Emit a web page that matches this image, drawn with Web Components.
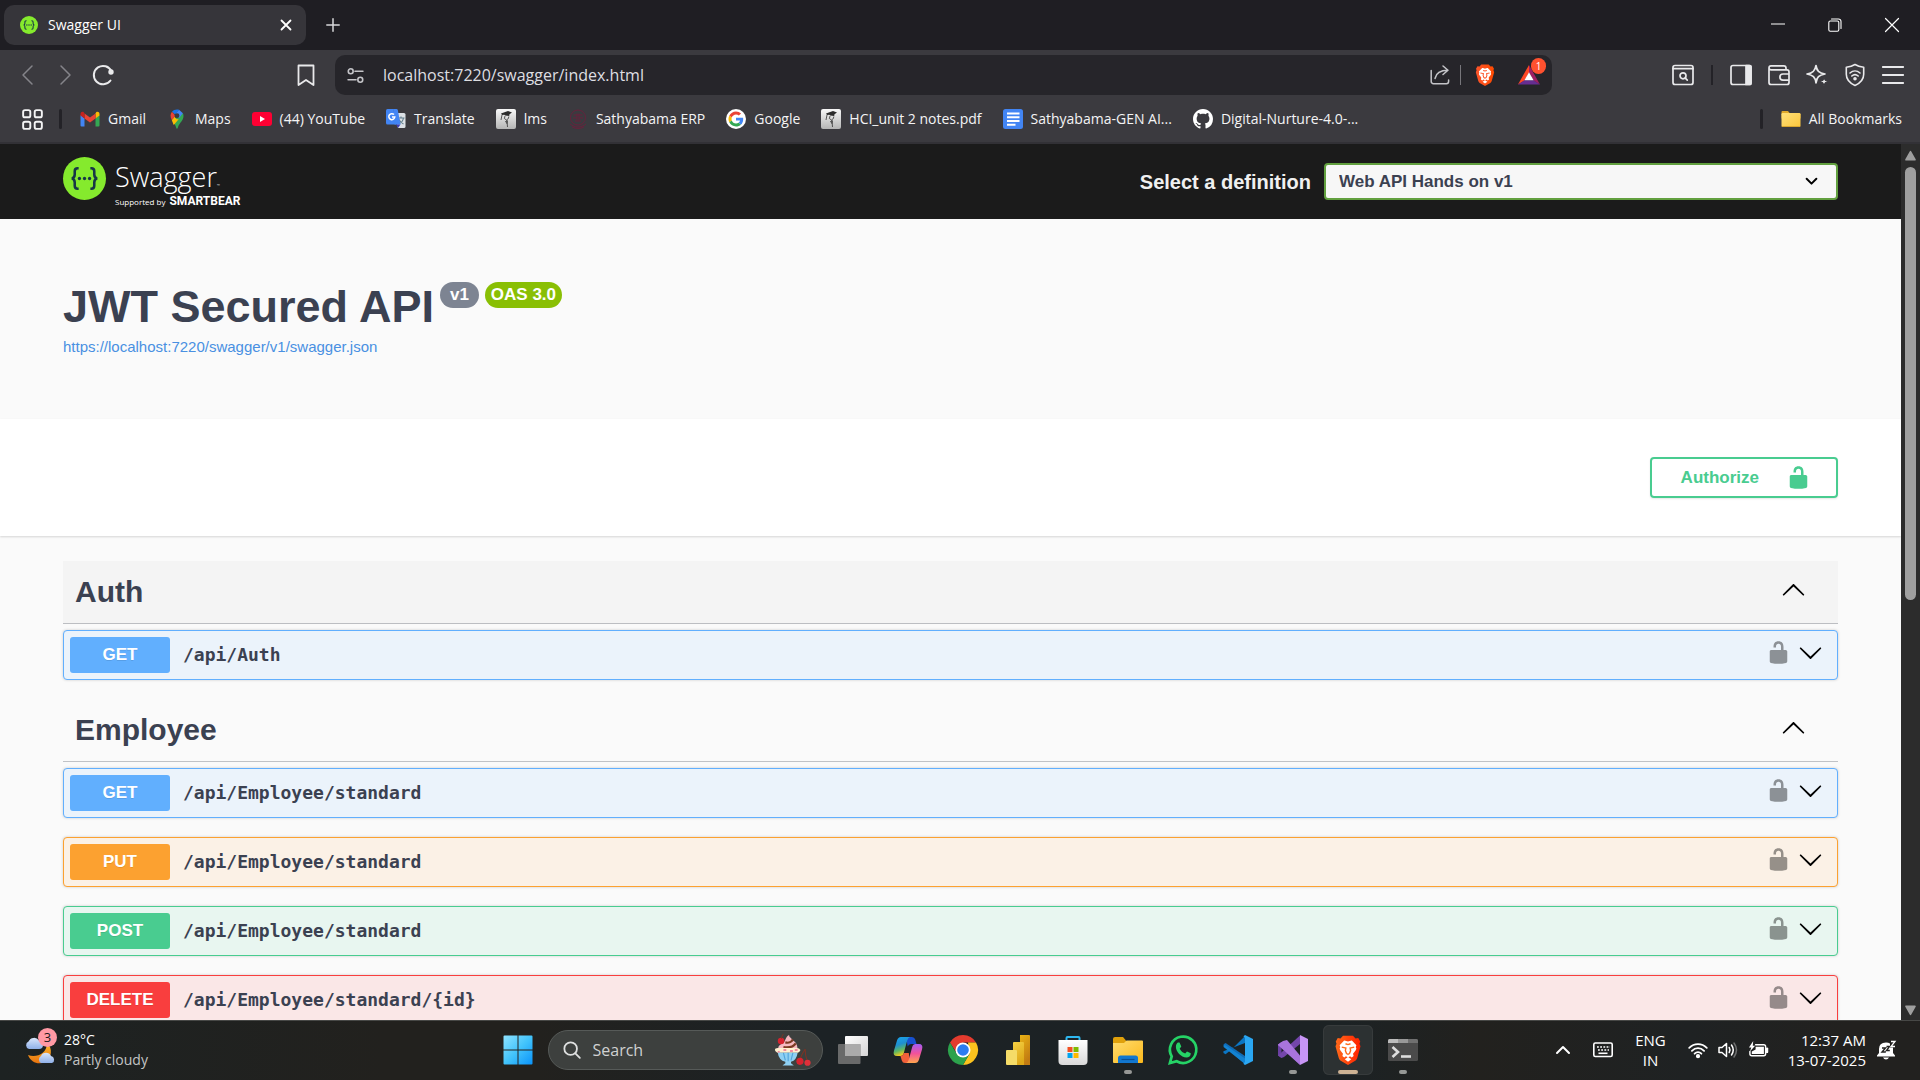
<!DOCTYPE html>
<html lang="en">
<head>
<meta charset="utf-8">
<title>Swagger UI</title>
<style>
  html, body { height: 100%; }
  body { margin: 0; overflow: hidden; background: #1f1e23; }
</style>
</head>
<body>
<desktop-screen></desktop-screen>

<script>
const UI_FONT = '"Open Sans", "Noto Sans", sans-serif';
const define = (name, html, setup) => {
  const template = document.createElement('template');
  template.innerHTML = html;
  customElements.define(name, class extends HTMLElement {
    connectedCallback() {
      if (this.shadowRoot) return;
      this.attachShadow({ mode: 'open' }).append(template.content.cloneNode(true));
      if (setup) setup(this, this.shadowRoot);
    }
  });
};

/* ---------- icons ---------- */
const line = (box, body, w = 1.5) => `<svg viewBox="0 0 ${box} ${box}" fill="none" stroke="currentColor" stroke-width="${w}" stroke-linecap="round" stroke-linejoin="round">${body}</svg>`;
const art = (box, body) => `<svg viewBox="0 0 ${box} ${box}">${body}</svg>`;

const lion = (a, b) => art(24, `<defs><linearGradient id="g"><stop offset="0" stop-color="${a}"/><stop offset="1" stop-color="${b}"/></linearGradient></defs>
  <path fill="url(#g)" d="M8 .5h8l2 2.2 2.2-.3 1.6 2.8-.6 1.7.8 2.1-2.6 9.4c-.3 1-.8 1.6-1.6 2.200L12 24l-5.800-3.400c-.8-.6-1.300-1.200-1.600-2.200L2 9l.8-2.100-.6-1.700 1.600-2.800 2.200.3z"/>
  <path fill="#fff" d="M12 5.200c.8 0 2.400-.9 3.300-.7l3.400 3.700-.5 1.300.5 1.500c-.5 1.500-2 2.900-2.700 4l.5 1.800-1.500 1.200-1.400-1-1.600 1.100-1.600-1.100-1.400 1-1.500-1.200.5-1.800c-.7-1.100-2.200-2.500-2.700-4l.5-1.500-.5-1.300 3.400-3.700c.9-.2 2.500.7 3.300.7z"/>
  <path fill="#fff" d="M12 17.600l2.600 1.700L12 21.400l-2.600-2.100z"/>
  <path fill="none" stroke="${a}" stroke-width="1.100" d="M7 9.700l3.300.7-.4 2.100.9 2.300L12 15.400l1.200-.6.9-2.300-.4-2.100 3.300-.7M10 7l2 .7 2-.7"/>`);

const chevronPath = 'M17.418 6.109c.272-.268.709-.268.979 0s.271.701 0 .969l-7.908 7.830c-.27.268-.707.268-.979 0l-7.908-7.830c-.27-.268-.27-.701 0-.969s.709-.268.979 0L10 13.250z';
const gradCap = art(20, `<defs><linearGradient id="g" x2="0" y2="1"><stop offset="0" stop-color="#f8f8f8"/><stop offset="1" stop-color="#b5b5b5"/></linearGradient></defs>
  <rect width="20" height="20" rx="2" fill="url(#g)"/><path fill="#2b2b2b" d="M5 4.500L12 2l4 1.500-2.500 1.800-.3 1.700-4-.4-1-.8L6 6z"/>
  <path fill="none" stroke="#333" stroke-width=".8" d="M6 6l-1 5M9 7l-.6 2.500 2 1.500 2-1.500.4-2M9 13l2.500-1.500M11 12l.5 6"/><path fill="#555" d="M10 11l2 1-.5 3-1.500-.5z"/>`);

const ICONS = {
  swagger: art(44, `<circle cx="22" cy="22" r="22" fill="#85ea2d"/><g fill="none" stroke="#173647" stroke-width="2.600"><path d="M16 11.500h-1c-2.200 0-3 1-3 3v3.500c0 2.600-.8 3.600-3 4 2.200.4 3 1.400 3 4v3.500c0 2 .8 3 3 3h1M28 11.500h1c2.200 0 3 1 3 3v3.500c0 2.600.8 3.600 3 4-2.200.4-3 1.400-3 4v3.500c0 2-.8 3-3 3h-1"/></g><g fill="#173647"><circle cx="16.800" cy="22" r="1.700"/><circle cx="22" cy="22" r="1.700"/><circle cx="27.200" cy="22" r="1.700"/></g>`),
  close: line(12, '<path d="M1.500 1.500l9 9M10.500 1.500l-9 9"/>', 1.8),
  plus: line(14, '<path d="M7 .8v12.400M.8 7h12.400"/>'),
  minimize: line(14, '<path d="M0 6h14" stroke-linecap="butt"/>', 1),
  restore: line(14, '<rect x=".8" y="3" width="10" height="10.200" rx="1.500"/><path d="M3.500 1h7a2.500 2.500 0 0 1 2.500 2.500v7"/>', 1.1),
  winclose: line(14, '<path d="M.5.5l13 13M13.500.5l-13 13"/>', 1.2),
  back: line(20, '<path d="M14 1L5 10l9 9"/>'),
  forward: line(20, '<path d="M6 1l9 9-9 9"/>'),
  reload: line(22, '<path d="M18.500 16.500A9.200 9.200 0 1 1 19.500 7.500"/><circle cx="19" cy="8" r="1.700" fill="currentColor"/>', 2),
  bookmark: line(22, '<path d="M3.500 1.500h15v19.500l-7.500-5-7.500 5z"/>', 1.8),
  tune: line(16, '<circle cx="3.500" cy="4" r="2.300"/><path d="M7.500 4H15M1 12h7.500"/><circle cx="12.500" cy="12" r="2.300"/>', 1.5),
  share: line(20, '<path d="M1.200 5.500v11a2.200 2.200 0 0 0 2.200 2.200h13a2.200 2.200 0 0 0 2.200-2.200V15M13 1l5 4.300L13 9.500M18 5.300C10 5.300 6 8 5 13.500"/>', 1.5),
  brave: lion('#fb542b', '#ff4a00'),
  braveApp: lion('#ff6a1a', '#ff2000'),
  bat: art(22, '<path fill="#ff4724" d="M11 1L0 20.500l6.500-4L11 8.500z"/><path fill="#9e1f63" d="M11 1l11 19.500-6.500-4L11 8.500z"/><path fill="#662d91" d="M0 20.500h22l-6.500-4.200h-9z"/><path fill="#fff" d="M11 8.300l4.600 8H6.400z"/>'),
  find: line(22, '<rect x="1" y="1.500" width="20" height="19" rx="2"/><path d="M1 4.700h20"/><circle cx="11" cy="11.800" r="3"/><path d="M13.300 14.200l2 2"/>', 1.7),
  sidebar: line(22, '<rect x="1" y="1.500" width="20" height="19" rx="2"/><path fill="currentColor" d="M16 1.500h4q1 0 1 1v17q0 1-1 1h-4z"/>', 1.7),
  wallet: line(22, '<path d="M18 5.500V4q0-2.200-2.200-2.200H3Q1 1.800 1 4v14.500q0 2 2 2h16q2 0 2-2V8q0-2.200-2-2.200H3.200Q1 5.800 1 4M21 10h-6a3 3 0 0 0 0 6.200H21"/>', 1.7),
  sparkle: line(22, '<path d="M10 1.500c.8 5.200 2.800 7.700 9 8.500-6.200 1-8.200 3.300-9 8.800C9.200 13.300 7 11 1 10c6-.8 8.200-3.300 9-8.500z"/><path fill="currentColor" stroke="#3b3a3f" stroke-width="1" stroke-linejoin="miter" d="M18 13.200l1.100 3.200 3.200 1.100-3.200 1.100L18 22l-1.100-3.400-3.200-1.100 3.200-1.100z"/>', 1.7),
  vpn: line(22, '<path d="M11 .5c3 2 5.500 2.400 8.700 2.700v7c0 5.200-3.500 8.900-8.700 11.200-5.200-2.300-8.700-6-8.700-11.200v-7C5.500 2.900 8 2.500 11 .5z"/><path d="M6 9c3-2.700 7-2.700 10 0M7.800 12c2-1.800 4.400-1.800 6.400 0"/><circle cx="11" cy="14.800" r="1" fill="currentColor"/>', 1.6),
  menu: line(22, '<path d="M.8 3h20.400M.8 11h20.400M.8 19h20.400"/>', 1.8),
  apps: line(22, '<rect x="1.200" y="1.200" width="7.500" height="7.500" rx="2"/><rect x="13.300" y="1.200" width="7.500" height="7.500" rx="2"/><rect x="1.200" y="13.300" width="7.500" height="7.500" rx="2"/><rect x="13.300" y="13.300" width="7.500" height="7.500" rx="2"/>', 2),
  gmail: art(20, '<path fill="#4285f4" d="M1.500 17.500h3v-8L.5 6v10.500q0 1 1 1z"/><path fill="#34a853" d="M15.500 17.500h3q1 0 1-1V6l-4 3.500z"/><path fill="#fbbc04" d="M15.500 4.500v5l4-3V5c0-2-2-2.800-3.300-1.800z"/><path fill="#ea4335" d="M4.500 9.500v-5L10 8.600l5.500-4.100v5L10 13.600z"/><path fill="#c5221f" d="M.5 5v1.500l4 3v-5l-.7-1.300C2.500 2.200.5 3 .5 5z"/>'),
  maps: art(20, '<path fill="#34a853" d="M4.800 11c1 2 2.700 3.300 3.700 5.700.6 1.500.8 3 1.500 3s.9-1.500 1.500-3c1.200-2.800 5-5.200 5-9.700 0-1-.2-2-.6-2.700z"/><path fill="#fbbc04" d="M4.800 11l3.400-4a2.500 2.500 0 0 0 3.600 2.900l-5 6C6 14.500 5.200 12 4.800 11z"/><path fill="#4285f4" d="M12 .8l3.900 3.500-4 5L8 5z"/><path fill="#1a73e8" d="M5 2.800C6.500.8 9.500 0 12 .8L8.200 5.400z"/><path fill="#ea4335" d="M5 2.800C3.200 5 3 8 4.800 11l3.600-4.300z"/><circle cx="10" cy="6.700" r="2.400" fill="#3b3a3f"/>'),
  youtube: art(20, '<rect y="3" width="20" height="14" rx="3" fill="#ff0033"/><path fill="#fff" d="M8 7l5 3-5 3z"/>'),
  translate: art(20, '<path fill="#dce1e6" d="M8 4h10q1.500 0 1.500 1.500v12q0 1.500-1.500 1.500h-6z"/><path fill="none" stroke="#607d8b" stroke-width="1.100" d="M11.500 9h7M15 7.500V9M17.500 9c-.5 3-2.500 5-5 6M13 10.500c.8 2 2.500 3.500 4.500 4.500"/><path fill="#4285f4" d="M1.500 0H7l4.500 15.500h-10Q0 15.500 0 14V1.500Q0 0 1.500 0z"/><path fill="#4285f4" d="M7 0h3.500q1 0 1.300 1l2.700 14.500h-6z"/><path fill="#3a3fb5" d="M10 15.500h4.500L12 19z"/><path fill="none" stroke="#fff" stroke-width="1.500" d="M8 5.600A3 3 0 1 0 8.800 8H6"/>'),
  cap: gradCap,
  crest: art(20, '<g fill="none" stroke="#6b1f3c" stroke-width=".9"><circle cx="10" cy="8.500" r="7.500"/><path d="M5.500 6h9M5 9h4M11 9h4M7 12h6M9 4.500v7M11 4.500v7M2 15c5 4 11 4 16 0M4 18c4 2 8 2 12 0"/></g>'),
  google: art(20, '<circle cx="10" cy="10" r="10" fill="#fff"/><g transform="translate(2.500 2.500) scale(.3125)"><path fill="#ea4335" d="M24 9.500c3.540 0 6.710 1.220 9.210 3.600l6.850-6.850C35.900 2.380 30.470 0 24 0 14.620 0 6.510 5.380 2.560 13.220l7.980 6.190C12.430 13.720 17.740 9.500 24 9.500z"/><path fill="#4285f4" d="M46.980 24.550c0-1.570-.15-3.090-.38-4.550H24v9.020h12.940c-.58 2.960-2.260 5.480-4.780 7.180l7.730 6c4.510-4.180 7.090-10.360 7.090-17.650z"/><path fill="#fbbc05" d="M10.530 28.590c-.48-1.450-.76-2.990-.76-4.590s.27-3.140.76-4.590l-7.980-6.190C.92 16.460 0 20.120 0 24c0 3.880.92 7.540 2.560 10.780l7.970-6.190z"/><path fill="#34a853" d="M24 48c6.480 0 11.930-2.130 15.890-5.810l-7.730-6c-2.150 1.450-4.920 2.300-8.160 2.300-6.260 0-11.570-4.220-13.470-9.910l-7.980 6.190C6.510 42.620 14.620 48 24 48z"/></g>'),
  docs: art(20, '<rect width="20" height="20" rx="2.500" fill="#4285f4"/><path stroke="#fff" stroke-width="2" d="M4 4.500h12.500M4 8.300h12.500M4 12.100h12.500M4 15.700h8.500"/>'),
  github: art(16, '<path fill="#fff" d="M8 0C3.580 0 0 3.580 0 8c0 3.540 2.290 6.530 5.470 7.590.4.070.55-.17.55-.38 0-.19-.01-.82-.01-1.490-2.010.37-2.530-.49-2.690-.94-.09-.23-.48-.94-.82-1.130-.28-.15-.68-.52-.01-.53.63-.01 1.080.58 1.230.82.72 1.210 1.870.87 2.330.66.070-.52.280-.87.510-1.070-1.780-.2-3.640-.89-3.640-3.950 0-.87.310-1.590.820-2.150-.08-.2-.36-1.020.080-2.120 0 0 .67-.21 2.200.82.640-.18 1.320-.27 2-.27s1.360.09 2 .27c1.530-1.040 2.200-.82 2.200-.82.440 1.100.16 1.920.08 2.120.51.56.82 1.270.82 2.150 0 3.070-1.870 3.750-3.650 3.950.29.25.54.73.54 1.480 0 1.070-.01 1.930-.01 2.200 0 .21.15.46.55.38A8.010 8.010 0 0 0 16 8c0-4.420-3.580-8-8-8z"/>'),
  folder: art(20, '<defs><linearGradient id="f" x2="1" y2="1"><stop offset="0" stop-color="#ffe07a"/><stop offset="1" stop-color="#fbc63c"/></linearGradient></defs><path fill="#e0a92c" d="M.5 3q0-1 1-1h5.500l2 2.500h9.500q1 0 1 1v4H.5z"/><rect x=".5" y="4" width="19" height="14" rx="1.200" fill="url(#f)"/><path fill="#d9a62f" d="M.7 17h18.600q-.2 1-1.200 1H1.800q-1 0-1.100-1z"/>'),
  unlock: art(20, '<path fill="currentColor" d="M15.800 8H14V5.600C14 2.703 12.665 1 10 1 7.334 1 6 2.703 6 5.600V6h2v-.801C8 3.754 8.797 3 10 3c1.203 0 2 .754 2 2.199V8H4c-.553 0-1 .646-1 1.199V17c0 .549.428 1.139.951 1.307l1.197.387C5.672 18.861 6.550 19 7.100 19h5.800c.549 0 1.428-.139 1.951-.307l1.196-.387c.524-.167.953-.757.953-1.306V9.199C17 8.646 16.352 8 15.800 8z"/>'),
  down: art(20, `<path fill="currentColor" d="${chevronPath}"/>`),
  up: art(20, `<path fill="currentColor" transform="rotate(180 10 10)" d="${chevronPath}"/>`),
  pick: line(12, '<path d="M1.500 3.500L6 8l4.500-4.500"/>', 1.8),
  arrowUp: art(12, '<path fill="#9f9f9f" stroke="#9f9f9f" stroke-linejoin="round" stroke-width="2" d="M6 2l4.800 8.500H1.200z"/>'),
  arrowDown: art(12, '<path fill="#9f9f9f" stroke="#9f9f9f" stroke-linejoin="round" stroke-width="2" d="M6 10L1.200 1.500h9.600z"/>'),
  weather: art(32, '<defs><linearGradient id="m" x2="0" y2="1"><stop offset="0" stop-color="#fbb62d"/><stop offset="1" stop-color="#e8730e"/></linearGradient><linearGradient id="c" x2="0" y2="1"><stop offset="0" stop-color="#d9e6fb"/><stop offset="1" stop-color="#8fb0e8"/></linearGradient></defs><path fill="url(#m)" d="M23 9c6 5 5 15-2 19-6 3-14 1-17-7 8 3 19-1 19-12z"/><path fill="url(#c)" d="M5 15a4 4 0 0 1-.5-7.500A6 6 0 0 1 15 6.500q4 .5 4 4.500t-4 4z"/><path fill="url(#c)" d="M17 29a4 4 0 0 1 0-7 5.500 5.500 0 0 1 10 0 3.700 3.700 0 0 1 1 7z"/>'),
  start: art(30, '<defs><linearGradient id="g" x2="1" y2="1"><stop offset="0" stop-color="#8fe3ff"/><stop offset=".5" stop-color="#43c4fb"/><stop offset="1" stop-color="#0a93fa"/></linearGradient></defs><path fill="url(#g)" d="M1.500.5H14.500V14.500H.5V1.500q0-1 1-1zM15.500.5h13q1 0 1 1v13h-14zM.5 15.500h14v14h-13q-1 0-1-1zM15.500 15.500h14v13q0 1-1 1h-13z"/>'),
  search: line(20, '<circle cx="8.500" cy="8.500" r="7"/><path d="M13.700 13.700l5 5"/>', 2),
  sundae: art(36, '<path fill="#f6b9c1" d="M5 18c-2-5 3-6 5-8 2-1 2-6 6-8 0 3 3 3 4 6 4 2 5 6 5 10z"/><path fill="none" stroke="#7d3b22" stroke-width="2.400" d="M12 10c4 1 7-1 8-3M10 15c6 1 11-1 13-4"/><circle cx="7.500" cy="8.500" r="3.500" fill="#d8232f"/><path fill="none" stroke="#7c3324" d="M8 6q0-3 2-5"/><path fill="#fff0cf" d="M1 18q0-2 3-2h20q3 0 4 2-1 3-4 3H5q-3 0-4-3z"/><path fill="#f28ba0" d="M4 19h2v2H4zM10 17h3v2h-3zM17 18h3v2h-3zM22 17h3v2h-3z"/><path fill="#8fd0f2" d="M4 21h21q-1 8-7 9.500V32l3 2.500H9L12 32v-1.500Q5 29 4 21z"/><path stroke="#4fa4dc" stroke-width="1.200" d="M10 21l2 8M15 21v9M20 21l-2 8"/><path fill="none" stroke="#7c3324" stroke-width="1.100" d="M33 17c-2 4-5 7-5 11M33 17q0 7 2 12"/><circle cx="27.500" cy="30" r="3.800" fill="#d8232f"/><circle cx="35.500" cy="31.500" r="3.300" fill="#e0303a"/>'),
  taskview: art(30, '<defs><linearGradient id="a" x2="1" y2="1"><stop offset="0" stop-color="#fff"/><stop offset="1" stop-color="#d5d5d5"/></linearGradient></defs><rect x="7" y="1" width="23" height="20" rx="1" fill="url(#a)"/><rect x="0" y="9" width="22.500" height="20" rx="1" fill="#777" fill-opacity=".85"/><rect x="7" y="9" width="15.500" height="12" fill="#ababab"/>'),
  copilot: art(30, '<defs><linearGradient id="a" x2=".3" y2="1"><stop offset="0" stop-color="#1aa8f0"/><stop offset=".45" stop-color="#1f8fd0"/><stop offset=".75" stop-color="#5fb860"/><stop offset="1" stop-color="#f2c81e"/></linearGradient><linearGradient id="b" x2="0" y2="1"><stop offset="0" stop-color="#a45cf5"/><stop offset=".5" stop-color="#f2529a"/><stop offset="1" stop-color="#ffa64d"/></linearGradient></defs><path fill="#1751d0" d="M13 2h6q2.500 0 3.200 2.500L23.500 9H18q-2.500 0-3.300 2.500z"/><path fill="url(#a)" d="M8 2h9q-2 .5-2.800 3.500L10.800 18Q10 21 7.500 21H4q-4.500 0-3-5.500L4 5.500Q5 2 8 2z"/><path fill="#f0603a" d="M17 28h-5q-2.500 0-3.200-2.500L7.500 21q2.500 0 3.300-3h5z"/><path fill="url(#b)" d="M22 28h-9q2-.5 2.800-3.500L19.200 12Q20 9 22.500 9H26q4.500 0 3 5.500l-3 10Q25 28 22 28z"/>'),
  chrome: art(30, '<path fill="#e33b2e" d="M2 7.500A15 15 0 0 1 28 7.500H15L9 18.500z"/><path fill="#fcc31e" d="M28 7.500A15 15 0 0 1 15 30l6.500-11.300L20 7.500z"/><path fill="#2ca24c" d="M2 7.500A15 15 0 0 0 15 30l6.500-11.300-12.700.3z"/><circle cx="15" cy="15" r="7.500" fill="#fff"/><circle cx="15" cy="15" r="5.800" fill="#2b7cf0"/>'),
  powerbi: art(30, '<defs><linearGradient id="a" x2=".4" y2="1"><stop offset="0" stop-color="#e8b215"/><stop offset="1" stop-color="#c17a12"/></linearGradient><linearGradient id="b" x2=".4" y2="1"><stop offset="0" stop-color="#f5d044"/><stop offset="1" stop-color="#dda818"/></linearGradient></defs><path fill="url(#a)" d="M17 0h9q1 0 1 1v29H17z"/><path fill="url(#b)" d="M10 8q0-1 1-1h9q1 0 1 1v22H10z"/><path fill="#f5dc68" d="M3 16q0-1 1-1h9q1 0 1 1v14H4q-1 0-1-1z"/>'),
  store: art(30, '<defs><linearGradient id="a" x2="0" y2="1"><stop offset="0" stop-color="#fff"/><stop offset="1" stop-color="#d9d9d9"/></linearGradient></defs><path fill="none" stroke="#2eb8f0" stroke-width="2" d="M8.500 6.500V3q0-1 1-1h11q1 0 1 1v3.500"/><path fill="url(#a)" d="M.5 5h29v21q0 4-4 4h-21q-4 0-4-4z"/><path fill="#f25022" d="M9.500 12h5v5h-5z"/><path fill="#7fba00" d="M15.500 12h5v5h-5z"/><path fill="#00a4ef" d="M9.500 18h5v5h-5z"/><path fill="#ffb900" d="M15.500 18h5v5h-5z"/>'),
  explorer: art(30, '<defs><linearGradient id="a" x2="1" y2="1"><stop offset="0" stop-color="#ffdc6e"/><stop offset="1" stop-color="#fbb91c"/></linearGradient></defs><path fill="#e0a10b" d="M0 4q0-2 2-2h8l3 3.500V10H0z"/><path fill="url(#a)" d="M0 8h11l2.500-2.500H29q1 0 1 1V27q0 1-1 1H1q-1 0-1-1z"/><path fill="#1277cf" d="M5 28v-5q0-2.500 2.500-2.500h15q2.500 0 2.500 2.500v5z"/><path stroke="#0b4f94" stroke-width="1.200" d="M8.500 24.500h13"/>'),
  whatsapp: art(30, '<path fill="none" stroke="#25d366" stroke-width="2.700" d="M1.900 28.100l1.800-6.700A13.200 13.200 0 1 1 8.700 26.300z"/><path fill="#25d366" d="M10 7.500h1.500l1.800 4-1.600 2.300c1.500 2.800 3.300 4 5.500 4.800l1.800-2.200 3.800 1.900c0 3-2 4.300-4.300 4.300-5.500-.5-10.600-6-10.600-10.700C7.900 9.500 9 8 10 7.500z"/>'),
  vscode: art(30, '<path fill="#0b76c4" d="M22 1L8.500 14.500 2.600 19.200.5 18l-.1-1.800L22 8z"/><path fill="#0f6cb8" d="M2.600 8L.6 9.300v1.800L22 29v-8z"/><path fill="#1383d2" d="M2.600 10.200L22 23.500V29L.6 12v-1.500z"/><path fill="#2aa7f3" d="M22 0l8 4v22l-8 4q-1.500-.5-1.500-2l1.500-.8V2.500L20.500 2Q21 .5 22 0z"/>'),
  vstudio: art(30, '<path fill="#6a3fa0" d="M0 9.500L3.500 7v16L0 20.500z"/><path fill="#8a56c4" d="M3.500 7L6 8l16 13v8.500L0 10z"/><path fill="#7446ab" d="M0 20.500L22 .5V9L6 22l-2.500 1z"/><path fill="#a974dd" d="M0 10V9.500L5 6l4-1 13 15.500V30z"/><path fill="#c795f6" d="M22 0l8 4v22l-8 4z"/>'),
  terminal: art(30, '<rect y="4" width="30" height="22" rx="1.500" fill="#4b4b4b"/><path fill="#bcbcbc" d="M0 8V5.500Q0 4 1.500 4H10v4z"/><path fill="#989898" d="M10 4h10v4H10z"/><path fill="#707070" d="M20 4h8.500Q30 4 30 5.500V8H20z"/><path fill="none" stroke="#ddd" stroke-width="2.600" d="M4.500 12l5.500 5-5.500 5"/><path stroke="#ddd" stroke-width="2.600" d="M13 21.500h10"/>'),
  trayup: line(16, '<path d="M2 11l6-6 6 6"/>', 2),
  keyboard: line(20, '<rect x=".8" y="3" width="18.400" height="13.500" rx="1.500"/><path stroke-linecap="butt" stroke-dasharray="1.800 1.400" d="M4 7h13M5 10h11"/><path stroke-linecap="butt" d="M5.500 13.300h9"/>', 1.6),
  wifi: line(20, '<path d="M1.200 7.800c5-5 12.600-5 17.600 0M3.900 10.900c3.600-3.600 8.600-3.600 12.200 0M6.600 13.700c2-2 4.800-2 6.800 0"/><circle cx="10" cy="16.200" r="1.200" fill="currentColor"/>', 1.8),
  sound: line(20, '<path d="M1 7.500h3L8.500 3.500v13L4 12.500H1z"/><path d="M11.200 7.500q1.600 2.500 0 5M13.500 5q3.500 5 0 10"/><path opacity=".35" d="M16 3q5 7 0 14"/>', 1.5),
  battery: line(21, '<path d="M8 5h8.500q2 0 2 2v7.500q0 2-2 2H4q-2 0-2-2V12"/><path stroke-width="2.500" d="M20 9v3.500"/><path stroke="none" fill="currentColor" d="M8 7h8.700v7.800H4V12l4-2zM5.500 1l-4.500 7h2.500L2 12l5.500-6H5z"/>', 1.5),
  bell: art(20, '<path fill="#fff" d="M3 13V9q0-6.500 7-6.500 2.500 0 4 1v4h3V13l2 2.500v1H1v-1zM7 17.500h6q-1 2-3 2t-3-2z"/><path fill="none" stroke="#22211f" stroke-width="1.400" d="M6 8h3.500L6 12h3.800M10.500 6.500h3l-3 4h3.300"/><path fill="none" stroke="#fff" stroke-width="1.300" d="M15 1.500h4l-4 5h4"/>')
};

define('ui-icon', `
<style>
  :host { display: inline-flex; flex: none; width: var(--size, 20px); height: var(--size, 20px); }
  svg { width: 100%; height: 100%; display: block; overflow: visible; }
</style>`, (host, root) => {
  const name = host.getAttribute('name');
  if (!ICONS[name]) return;
  root.append(document.createRange().createContextualFragment(ICONS[name]));
  root.querySelector('svg').setAttribute('aria-hidden', 'true');
});

define('icon-button', `
<style>
  :host { display: inline-flex; flex: none; }
  button { all: unset; box-sizing: border-box; display: inline-flex; align-items: center; justify-content: center; width: var(--w, auto); height: var(--h, auto); color: inherit; }
</style>
<button type="button"><slot></slot></button>`, (host, root) => {
  root.querySelector('button').setAttribute('aria-label', host.getAttribute('label') || '');
});

/* ---------- browser chrome ---------- */
define('tab-strip', `
<style>
  :host { display: flex; align-items: center; height: 50px; background: #1f1e23; color: #fff; font: 14px/20px ${UI_FONT}; }
  .tab { box-sizing: border-box; display: flex; align-items: center; gap: 10px; width: 302px; height: 40px; margin-left: 4px; padding: 0 14px 0 16px; border-radius: 10px; background: #36353a; }
  .tab span { flex: 1; }
  .new { margin-left: 20px; color: #d8d8da; }
  .controls { display: flex; margin-left: auto; }
  .controls icon-button { --w: 57px; --h: 50px; }
</style>
<div class="tab"><ui-icon name="swagger" style="--size:18px"></ui-icon><span>Swagger UI</span><icon-button label="Close tab"><ui-icon name="close" style="--size:12px"></ui-icon></icon-button></div>
<icon-button class="new" label="New tab"><ui-icon name="plus" style="--size:14px"></ui-icon></icon-button>
<div class="controls">
  <icon-button label="Minimize"><ui-icon name="minimize" style="--size:14px"></ui-icon></icon-button>
  <icon-button label="Restore"><ui-icon name="restore" style="--size:14px"></ui-icon></icon-button>
  <icon-button label="Close"><ui-icon name="winclose" style="--size:14px"></ui-icon></icon-button>
</div>`);

define('address-bar', `
<style>
  :host { display: flex; flex: 1; align-items: center; height: 40px; padding: 0 12px; border-radius: 10px; background: #26252a; color: #c4c4c8; }
  input { all: unset; flex: 1; min-width: 0; margin-left: 19px; color: #dedee1; font: 16px/24px ${UI_FONT}; }
  i { width: 1px; height: 20px; margin: 0 13px 0 10px; background: #77767b; }
  .rewards { position: relative; display: flex; margin-left: 22px; }
  .badge { position: absolute; right: -6px; top: -6px; width: 15px; height: 16px; border-radius: 8px; background: #ff512f; color: #fff; font: 10px/16px ${UI_FONT}; text-align: center; }
</style>
<ui-icon name="tune" style="--size:17px"></ui-icon>
<input aria-label="Address" value="localhost:7220/swagger/index.html">
<icon-button label="Share"><ui-icon name="share"></ui-icon></icon-button>
<i></i>
<icon-button label="Shields"><ui-icon name="brave" style="--size:22px"></ui-icon></icon-button>
<span class="rewards"><icon-button label="Rewards"><ui-icon name="bat" style="--size:22px"></ui-icon></icon-button><span class="badge">1</span></span>`);

define('browser-toolbar', `
<style>
  :host { display: flex; align-items: center; height: 50px; padding: 0 16px 0 18px; background: #3b3a3f; color: #e9e9eb; }
  .nav { display: flex; gap: 17px; align-items: center; }
  .dim { color: #85848a; }
  .mark { margin: 0 18px 0 181px; }
  .tools { display: flex; align-items: center; gap: 16px; margin-left: 120px; }
  .tools i { width: 2px; height: 20px; margin: 0 1px; background: #232227; }
</style>
<div class="nav">
  <icon-button class="dim" label="Back"><ui-icon name="back"></ui-icon></icon-button>
  <icon-button class="dim" label="Forward"><ui-icon name="forward"></ui-icon></icon-button>
  <icon-button label="Reload"><ui-icon name="reload" style="--size:22px"></ui-icon></icon-button>
</div>
<icon-button class="mark" label="Bookmark"><ui-icon name="bookmark" style="--size:22px"></ui-icon></icon-button>
<address-bar></address-bar>
<div class="tools" style="--size:22px">
  <icon-button label="Find"><ui-icon name="find"></ui-icon></icon-button><i></i>
  <icon-button label="Sidebar"><ui-icon name="sidebar"></ui-icon></icon-button>
  <icon-button label="Wallet"><ui-icon name="wallet"></ui-icon></icon-button>
  <icon-button label="Leo"><ui-icon name="sparkle"></ui-icon></icon-button>
  <icon-button label="VPN"><ui-icon name="vpn"></ui-icon></icon-button>
  <icon-button label="Menu"><ui-icon name="menu"></ui-icon></icon-button>
</div>`);

define('bookmark-link', `
<style>
  :host { display: inline-flex; }
  a { display: inline-flex; align-items: center; gap: 8px; color: #f4f4f5; text-decoration: none; white-space: nowrap; }
</style>
<a href="#"><slot></slot></a>`, (host, root) => {
  const icon = document.createElement('ui-icon');
  icon.setAttribute('name', host.getAttribute('icon'));
  root.querySelector('a').prepend(icon);
});

define('bookmarks-bar', `
<style>
  :host { display: flex; align-items: center; height: 38px; padding: 0 18px 4px 22px; border-bottom: 2px solid #323136; background: #3b3a3f; color: #f4f4f5; font: 14px/20px ${UI_FONT}; }
  i { width: 3px; height: 20px; border-radius: 2px; background: #232227; }
  nav { display: flex; flex: 1; gap: 21px; margin-left: 18px; }
  .apps { margin-right: 16px; }
  .all { margin-left: 18px; }
</style>
<icon-button class="apps" label="Bookmark groups"><ui-icon name="apps" style="--size:21px"></ui-icon></icon-button><i></i>
<nav>
  <bookmark-link icon="gmail">Gmail</bookmark-link>
  <bookmark-link icon="maps">Maps</bookmark-link>
  <bookmark-link icon="youtube">(44) YouTube</bookmark-link>
  <bookmark-link icon="translate">Translate</bookmark-link>
  <bookmark-link icon="cap">lms</bookmark-link>
  <bookmark-link icon="crest">Sathyabama ERP</bookmark-link>
  <bookmark-link icon="google">Google</bookmark-link>
  <bookmark-link icon="cap">HCI_unit 2 notes.pdf</bookmark-link>
  <bookmark-link icon="docs">Sathyabama-GEN AI...</bookmark-link>
  <bookmark-link icon="github">Digital-Nurture-4.0-...</bookmark-link>
</nav>
<i></i>
<bookmark-link class="all" icon="folder">All Bookmarks</bookmark-link>`);

/* ---------- Swagger page ---------- */
define('swagger-logo', `
<style>
  :host { display: flex; gap: 9px; align-items: flex-start; color: #fff; }
  .words { display: flex; flex-direction: column; gap: 4px; padding-top: 5px; }
  .name { font: 300 27px/30px "Open Sans", sans-serif; }
  .name small { font-size: 4px; line-height: 0; }
  .by { display: flex; gap: 4px; align-items: center; font: 8px/11px "Open Sans", sans-serif; }
  b { font: 700 12px/11px Roboto, sans-serif; }
  ui-icon { --size: 43px; }
</style>
<ui-icon name="swagger"></ui-icon>
<div class="words"><span class="name">Swagger<small>™</small></span><span class="by">Supported by <b>SMARTBEAR</b></span></div>`);

define('swagger-topbar', `
<style>
  :host { display: flex; align-items: center; justify-content: space-between; height: 75px; padding: 0 63px; background: #1b1b1b; }
  form { display: flex; align-items: center; gap: 13px; }
  label { color: #f0f0f0; font: 700 20px/24px "Liberation Sans", sans-serif; }
  .pick { display: grid; align-items: center; width: 514px; }
  select { grid-area: 1 / 1; appearance: none; box-sizing: border-box; width: 100%; height: 37px; margin: 0; padding: 0 13px; border: 2px solid #62a03f; border-radius: 4px; background: #f7f7f7; color: #3b4151; font: 700 17px/24px "Liberation Sans", sans-serif; }
  .pick ui-icon { grid-area: 1 / 1; justify-self: end; margin-right: 20px; color: #000; --size: 13px; pointer-events: none; }
</style>
<swagger-logo></swagger-logo>
<form><label for="definition">Select a definition</label>
<span class="pick"><select id="definition"><option>Web API Hands on v1</option></select><ui-icon name="pick"></ui-icon></span></form>`);

define('api-info', `
<style>
  :host { display: block; padding: 63px 63px 61px; color: #3b4151; font-family: "Liberation Sans", sans-serif; }
  h1 { display: flex; gap: 6px; margin: 0 0 4px; font: 700 45px/50px "Liberation Sans", sans-serif; }
  .pill { height: 26px; padding: 0 6px; border-radius: 13px; background: #89bf04; color: #fff; font: 700 17px/26px "Liberation Sans", sans-serif; }
  .version { padding: 0 10px; background: #7d8492; }
  a { color: #4990e2; font-size: 15px; line-height: 22px; text-decoration: none; }
</style>
<h1>JWT Secured API <span class="pill version">v1</span><span class="pill">OAS 3.0</span></h1>
<a href="#">https://localhost:7220/swagger/v1/swagger.json</a>`);

define('auth-bar', `
<style>
  :host { display: flex; justify-content: flex-end; padding: 38px 63px; background: #fff; box-shadow: 0 1px 2px rgba(0,0,0,.15); }
  button { display: flex; align-items: center; gap: 27px; height: 41px; padding: 0 25px 0 29px; border: 2px solid #49cc90; border-radius: 4px; background: transparent; box-shadow: 0 1px 2px rgba(0,0,0,.1); color: #49cc90; font: 700 17px/24px "Liberation Sans", sans-serif; --size: 25px; }
</style>
<button type="button">Authorize <ui-icon name="unlock"></ui-icon></button>`);

define('op-block', `
<style>
  :host { --c: #61affe; --bg: #ebf3fb; display: block; margin-bottom: 19px; }
  :host([method="PUT"]) { --c: #fca130; --bg: #fbf1e6; }
  :host([method="POST"]) { --c: #49cc90; --bg: #e8f6f0; }
  :host([method="DELETE"]) { --c: #f93e3e; --bg: #fae7e7; }
  .row { box-sizing: border-box; display: flex; align-items: center; height: 50px; padding: 0 14px 0 6px; border: 1px solid var(--c); border-radius: 4px; background: var(--bg); box-shadow: 0 0 3px rgba(0,0,0,.19); color: #3b4151; --size: 25px; }
  .method { width: 100px; border-radius: 3px; background: var(--c); color: #fff; font: 700 17px/36px "Liberation Sans", sans-serif; text-align: center; text-shadow: 0 1px 0 rgba(0,0,0,.1); }
  .path { flex: 1; margin-left: 13px; font: 700 18px/24px "DejaVu Sans Mono", monospace; }
  .tools { display: flex; gap: 7px; padding-bottom: 5px; color: #000; }
  .lock { opacity: .4; }
</style>
<div class="row"><span class="method"></span><span class="path"><slot></slot></span>
<span class="tools"><icon-button class="lock" label="Authorization"><ui-icon name="unlock"></ui-icon></icon-button><icon-button label="Expand operation"><ui-icon name="down"></ui-icon></icon-button></span></div>`,
(host, root) => { root.querySelector('.method').textContent = host.getAttribute('method'); });

define('tag-section', `
<style>
  :host { display: block; }
  header { box-sizing: border-box; display: flex; align-items: center; justify-content: space-between; height: 63px; margin-bottom: 6px; padding: 0 32px 0 12px; border-bottom: 1px solid rgba(59,65,81,.3); color: #3b4151; --size: 25px; }
  :host([active]) header { background: #f4f4f4; }
  h2 { margin: 0; font: 700 30px/36px "Liberation Sans", sans-serif; }
  icon-button { color: #000; padding-bottom: 4px; }
</style>
<header><h2></h2><icon-button label="Collapse"><ui-icon name="up"></ui-icon></icon-button></header>
<slot></slot>`, (host, root) => { root.querySelector('h2').textContent = host.getAttribute('heading'); });

define('page-scrollbar', `
<style>
  :host { display: flex; flex-direction: column; align-items: center; width: 19px; padding: 6px 0 4px; box-sizing: border-box; background: #2c2c2c; --size: 11px; }
  .track { flex: 1; margin: 6px 0; }
  .thumb { width: 11px; height: 52%; border-radius: 6px; background: #9f9f9f; }
</style>
<ui-icon name="arrowUp"></ui-icon><div class="track"><div class="thumb"></div></div><ui-icon name="arrowDown"></ui-icon>`);

define('swagger-page', `
<style>
  :host { display: flex; min-height: 0; overflow: hidden; background: #fafafa; }
  main { flex: 1; min-width: 0; overflow: hidden; }
  .ops { padding: 25px 63px 0; }
</style>
<main>
  <swagger-topbar></swagger-topbar>
  <api-info></api-info>
  <auth-bar></auth-bar>
  <div class="ops">
    <tag-section heading="Auth" active><op-block method="GET">/api/Auth</op-block></tag-section>
    <tag-section heading="Employee">
      <op-block method="GET">/api/Employee/standard</op-block>
      <op-block method="PUT">/api/Employee/standard</op-block>
      <op-block method="POST">/api/Employee/standard</op-block>
      <op-block method="DELETE">/api/Employee/standard/{id}</op-block>
    </tag-section>
  </div>
</main>
<page-scrollbar></page-scrollbar>`);

/* ---------- taskbar ---------- */
define('task-app', `
<style>
  :host { display: grid; --size: 30px; }
  button { all: unset; box-sizing: border-box; position: relative; display: grid; place-items: center; width: 50px; height: 50px; border-radius: 6px; }
  :host([active]) button { background: #2c3132; box-shadow: inset 0 0 0 1px #373b3c; }
  :host([running]) button::after { content: ""; position: absolute; bottom: 1px; width: 8px; height: 4px; border-radius: 2px; background: #969896; }
  :host([active]) button::after { width: 20px; background: #cdb294; }
</style>
<button type="button"></button>`, (host, root) => {
  const icon = document.createElement('ui-icon');
  icon.setAttribute('name', host.getAttribute('icon'));
  const button = root.querySelector('button');
  button.setAttribute('aria-label', host.getAttribute('icon'));
  button.append(icon);
});

define('weather-widget', `
<style>
  :host { display: flex; align-items: center; gap: 8px; color: #fff; font: 14px/20px ${UI_FONT}; }
  .sky { position: relative; display: flex; --size: 32px; }
  .badge { position: absolute; right: -1px; top: -6px; width: 19px; height: 19px; border-radius: 50%; background: #ff99a4; color: #1a1a1a; font: 13px/19px ${UI_FONT}; text-align: center; }
  .text { display: flex; flex-direction: column; }
  .text span + span { color: #c3c4c4; }
</style>
<span class="sky"><ui-icon name="weather"></ui-icon><span class="badge">3</span></span>
<span class="text"><span>28°C</span><span>Partly cloudy</span></span>`);

define('search-box', `
<style>
  :host { box-sizing: border-box; display: flex; align-items: center; width: 275px; height: 40px; padding: 0 14px; border: 1px solid #565a58; border-radius: 20px; background: #3d403e; color: #dfe0e0; }
  input { all: unset; flex: 1; min-width: 0; margin-left: 12px; font: 16px/24px ${UI_FONT}; }
  input::placeholder { color: #d0d1d1; opacity: 1; }
</style>
<ui-icon name="search" style="--size:18px"></ui-icon><input placeholder="Search" aria-label="Search"><ui-icon name="sundae" style="--size:34px"></ui-icon>`);

define('system-tray', `
<style>
  :host { display: flex; justify-content: flex-end; align-items: center; color: #fff; font: 15px/20px ${UI_FONT}; }
  .lang { margin: 0 22px; text-align: center; }
  .status { display: flex; gap: 10px; }
  .clock { margin: 0 10px 0 20px; text-align: right; }
  .keys { margin-left: 22px; }
  .lang span, .clock span { display: block; white-space: nowrap; }
</style>
<icon-button label="Show hidden icons"><ui-icon name="trayup" style="--size:16px"></ui-icon></icon-button>
<icon-button class="keys" label="Touch keyboard"><ui-icon name="keyboard"></ui-icon></icon-button>
<div class="lang"><span>ENG</span><span>IN</span></div>
<div class="status"><ui-icon name="wifi"></ui-icon><ui-icon name="sound"></ui-icon><ui-icon name="battery"></ui-icon></div>
<div class="clock"><span>12:37 AM</span><span>13-07-2025</span></div>
<icon-button label="Notifications"><ui-icon name="bell"></ui-icon></icon-button>`);

define('task-bar', `
<style>
  :host { box-sizing: border-box; display: grid; grid-template-columns: 1fr auto 1fr; align-items: center; height: 60px; padding: 0 24px 1px; border-top: 1px solid #474846; background: linear-gradient(90deg, #1d2222 0, #22211e 20%, #22211e 28%, #1c2225 42%, #1c2224 70%, #22211e 77%, #1f2223 88%, #22211f 96%); }
  .apps { display: flex; align-items: center; gap: 5px; }
</style>
<weather-widget></weather-widget>
<div class="apps">
  <task-app icon="start"></task-app><search-box></search-box><task-app icon="taskview"></task-app><task-app icon="copilot"></task-app><task-app icon="chrome"></task-app><task-app icon="powerbi"></task-app><task-app icon="store"></task-app><task-app icon="explorer" running></task-app><task-app icon="whatsapp"></task-app><task-app icon="vscode"></task-app><task-app icon="vstudio" running></task-app><task-app icon="braveApp" running active></task-app><task-app icon="terminal" running></task-app>
</div>
<system-tray></system-tray>`);

define('desktop-screen', `
<style>
  :host { display: flex; flex-direction: column; height: 100vh; }
  swagger-page { flex: 1; }
</style>
<tab-strip></tab-strip>
<browser-toolbar></browser-toolbar>
<bookmarks-bar></bookmarks-bar>
<swagger-page></swagger-page>
<task-bar></task-bar>`);
</script>
</body>
</html>
